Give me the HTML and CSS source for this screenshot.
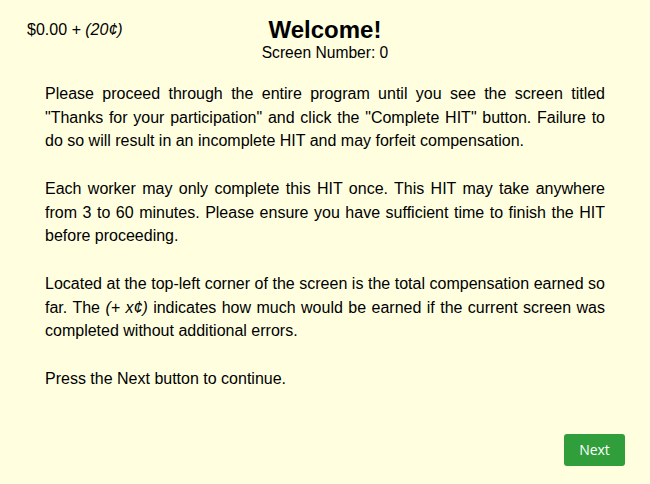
FILE: index.html
```html
<!DOCTYPE html>
<html>
<head>
<meta charset="utf-8">
<link rel="stylesheet" href="styles.css">
</head>
<body>
<div class="page">
  <div class="earnings">$0.00 <i>+ (20¢)</i></div>
  <header class="header">
    <h1 class="title">Welcome!</h1>
    <div class="screen-num">Screen Number: 0</div>
  </header>
  <main class="content">
    <p>Please proceed through the entire program until you see the screen titled "Thanks for your participation" and click the "Complete HIT" button. Failure to do so will result in an incomplete HIT and may forfeit compensation.</p>
    <p>Each worker may only complete this HIT once. This HIT may take anywhere from 3 to 60 minutes. Please ensure you have sufficient time to finish the HIT before proceeding.</p>
    <p>Located at the top-left corner of the screen is the total compensation earned so far. The <i>(+ x¢)</i> indicates how much would be earned if the current screen was completed without additional errors.</p>
    <p>Press the Next button to continue.</p>
  </main>
  <div class="actions">
    <button class="next-btn">Next</button>
  </div>
</div>
</body>
</html>
```

FILE: styles.css
```css
html, body {
  margin: 0;
  padding: 0;
  background: #ffffe0;
}
body {
  font-family: "Liberation Sans", Arial, sans-serif;
  color: #000;
  font-size: 16px;
}
.page {
  position: relative;
  width: 650px;
  height: 484px;
}
.earnings {
  position: absolute;
  left: 27px;
  top: 21px;
  font-size: 16px;
}
.header {
  display: flex;
  flex-direction: column;
  align-items: center;
  padding-top: 16px;
}
.title {
  margin: 0;
  font-size: 24px;
  line-height: 28px;
  font-weight: bold;
}
.screen-num {
  font-size: 15.6px;
  line-height: 18px;
}
.content {
  width: 560px;
  margin: 20px auto 0;
}
.content p {
  margin: 0 0 24.5px;
  line-height: 23.5px;
  text-align: justify;
}
.actions {
  display: flex;
  justify-content: flex-end;
  padding-right: 25px;
  margin-top: 43px;
}
.next-btn {
  width: 61px;
  height: 32px;
  background: #2f9e3b;
  color: #fff;
  border: none;
  border-radius: 3px;
  font-family: "Open Sans", "Liberation Sans", sans-serif;
  font-size: 14px;
  padding: 0;
}
```
